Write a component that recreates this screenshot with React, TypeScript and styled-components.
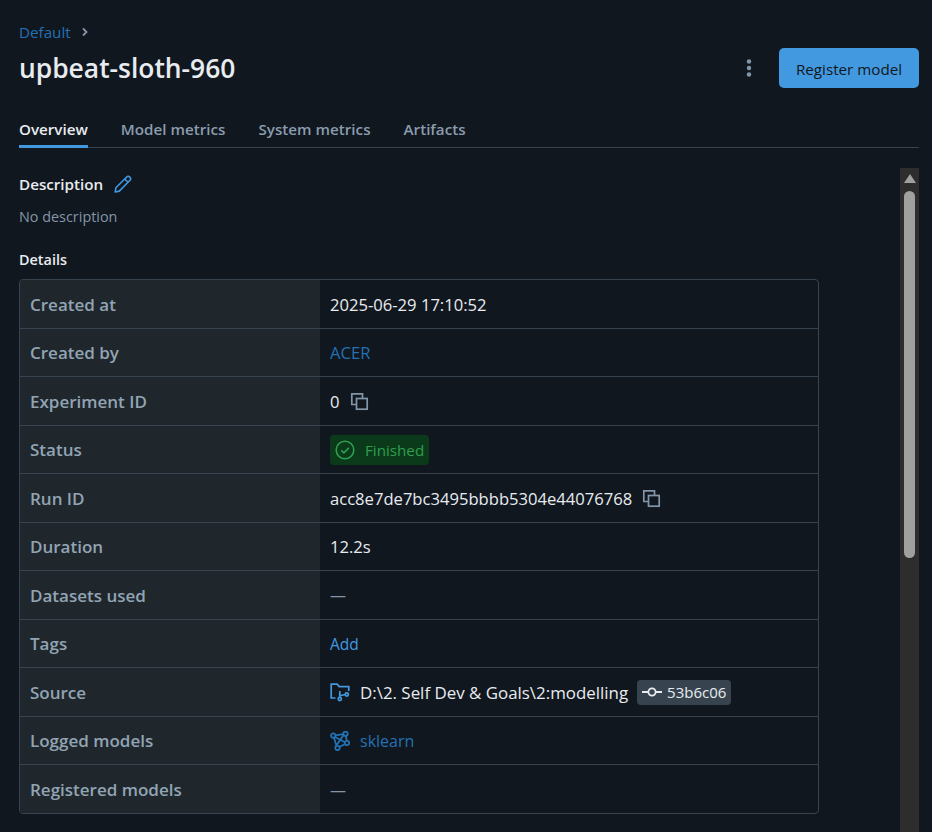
import React from 'react';
import styled, { createGlobalStyle } from 'styled-components';

const GlobalStyle = createGlobalStyle`
  html, body {
    margin: 0;
    padding: 0;
    height: 832px;
    overflow: hidden;
    background: #11171f;
  }
  body {
    font-family: "Open Sans", "Noto Sans", "Liberation Sans", sans-serif;
    color: #e8ecf0;
  }
  * {
    box-sizing: border-box;
  }
`;

const Page = styled.div`
  padding: 22px 13px 0 19px;
  height: 832px;
  overflow: hidden;
`;

const Breadcrumb = styled.div`
  display: flex;
  align-items: center;
  gap: 9px;
  height: 20px;
  font-size: 15.2px;
`;

const Crumb = styled.a`
  color: #2272b4;
`;

const TitleRow = styled.div`
  display: flex;
  align-items: center;
  justify-content: space-between;
  height: 40px;
  margin-top: 6px;
`;

const Title = styled.h1`
  margin: 0;
  font-size: 26.4px;
  font-weight: 600;
  line-height: 40px;
  color: #e8ecf0;
`;

const Actions = styled.div`
  display: flex;
  align-items: center;
  gap: 18px;
`;

const MoreButton = styled.div`
  display: flex;
  width: 24px;
  height: 24px;
  align-items: center;
  justify-content: center;
  margin-top: -1px;
`;

const PrimaryButton = styled.button`
  width: 140px;
  height: 40px;
  border: 0;
  border-radius: 5px;
  background: #4299e0;
  color: #11171c;
  font-family: inherit;
  font-size: 15.2px;
  padding: 2px 0 0;
`;

const Tabs = styled.div`
  display: flex;
  gap: 33px;
  margin-top: 26px;
  height: 34px;
  border-bottom: 1px solid #37444f;
`;

const Tab = styled.div<{ $active?: boolean }>`
  height: 34px;
  padding-top: 5px;
  font-size: 15.2px;
  font-weight: 600;
  line-height: 20px;
  color: ${(p) => (p.$active ? '#e8ecf0' : '#8a9cad')};
  border-bottom: ${(p) => (p.$active ? '3px solid #4299e0' : 'none')};
`;

const Body = styled.div`
  display: flex;
  justify-content: space-between;
  margin-top: 20px;
`;

const Content = styled.div`
  width: 800px;
  padding-top: 4px;
`;

const SectionHead = styled.div`
  display: flex;
  align-items: center;
  gap: 10px;
  height: 24px;
  font-size: 15.2px;
  font-weight: 600;
  color: #e8ecf0;
`;

const Muted = styled.div`
  margin-top: 11px;
  font-size: 14.4px;
  line-height: 20px;
  color: #8396a8;
`;

const DetailsHead = styled(SectionHead)`
  margin-top: 20px;
  font-size: 14.4px;
`;

const Table = styled.div`
  margin-top: 8px;
  border: 1px solid #37444f;
  border-radius: 4px;
  overflow: hidden;
`;

const Row = styled.div`
  display: grid;
  grid-template-columns: 300px 1fr;
  height: 48.5px;
  border-bottom: 1px solid #37444f;

  &:last-child {
    height: 48px;
    border-bottom: 0;
  }
`;

const Label = styled.div`
  display: flex;
  align-items: center;
  padding: 1px 0 0 10px;
  background: #1f272d;
  font-size: 17px;
  font-weight: 600;
  color: #92a4b3;
`;

const Value = styled.div`
  display: flex;
  align-items: center;
  padding: 1px 0 0 10px;
  font-size: 16.6px;
  color: #e8ecf0;
`;

const LinkText = styled.span`
  color: #2272b4;
`;

const ModelLink = styled(LinkText)`
  font-size: 16px;
`;

const SourcePath = styled.span`
  font-size: 16.9px;
`;

const AddLink = styled.span`
  color: #4299e0;
  font-size: 15.5px;
`;

const Dash = styled.span`
  color: #8396a8;
  font-size: 16px;
`;

const CopyIcon = styled.svg`
  margin-left: 10px;
  flex: none;
`;

const LeadIcon = styled.svg`
  margin-right: 10px;
  flex: none;
`;

const StatusPill = styled.div`
  display: flex;
  align-items: center;
  gap: 10px;
  height: 30px;
  padding: 0 5px;
  border-radius: 4px;
  background: #0b3a1a;
  color: #2f9e4f;
  font-size: 15.2px;
`;

const CommitTag = styled.div`
  display: flex;
  align-items: center;
  gap: 5px;
  height: 25px;
  margin-left: 9px;
  padding: 0 5px;
  border-radius: 4px;
  background: #37444f;
  font-size: 15px;
  color: #e8ecf0;
`;

const ScrollTrack = styled.div`
  width: 19px;
  height: 664px;
  display: flex;
  flex-direction: column;
  align-items: center;
  background: #2d2d2d;
  padding-top: 6px;
`;

const ScrollArrow = styled.div`
  width: 0;
  height: 0;
  border-left: 6.5px solid transparent;
  border-right: 6.5px solid transparent;
  border-bottom: 9px solid #a0a0a0;
`;

const ScrollThumb = styled.div`
  width: 11px;
  height: 367px;
  margin-top: 8px;
  border-radius: 6px;
  background: #a0a0a0;
`;

const Kebab = () => (
  <svg width="24" height="24" viewBox="0 0 24 24" fill="#8396a8">
    <circle cx="12" cy="5.5" r="2.2" />
    <circle cx="12" cy="12" r="2.2" />
    <circle cx="12" cy="18.5" r="2.2" />
  </svg>
);

const Pencil = () => (
  <svg width="20" height="20" viewBox="0 0 20 20" fill="none" stroke="#4299e0" strokeWidth="1.6" strokeLinejoin="round">
    <path d="M2.2 18l.7-4.2L13.7 3a2.1 2.1 0 0 1 3 0l.3.3a2.1 2.1 0 0 1 0 3L6.3 17.1 2.2 18z" />
    <path d="M11.8 5l3.2 3.2" />
  </svg>
);

const Copy = () => (
  <CopyIcon width="19" height="19" viewBox="0 0 19 19" fill="none" stroke="#8396a8" strokeWidth="1.7">
    <path d="M12.5 6V1.8H1.8v10.7H6" />
    <rect x="6.5" y="6.5" width="10.7" height="10.7" />
  </CopyIcon>
);

const CheckCircle = () => (
  <svg width="20" height="20" viewBox="0 0 20 20" fill="none" stroke="#2f9e4f" strokeWidth="1.6">
    <circle cx="10" cy="10" r="8.8" />
    <path d="M6.2 10.2l2.7 2.7 5-5" />
  </svg>
);

const FolderBranch = () => (
  <LeadIcon width="20" height="20" viewBox="0 0 20 20" fill="none" stroke="#4299e0" strokeWidth="1.7">
    <path d="M5.5 16H1.2V2.2h6l2 2.4h9.6V9" />
    <circle cx="9.8" cy="17" r="1.6" />
    <circle cx="16.8" cy="12.5" r="1.6" />
    <path d="M9.8 9v6.4M9.8 13.8c2.5 0 3.5-1.3 5.4-1.3" />
  </LeadIcon>
);

const ModelsIcon = () => (
  <LeadIcon width="20" height="20" viewBox="0 0 20 20" fill="none" stroke="#2272b4" strokeWidth="1.8">
    <circle cx="3.2" cy="4.6" r="2.2" />
    <circle cx="15.5" cy="2.8" r="2.2" />
    <circle cx="17" cy="12" r="2.2" />
    <circle cx="7.5" cy="17" r="2.2" />
    <path d="M5.4 4.3l7.9-1.2M15.8 5l1 4.8M15 13l-5.6 3M6.5 15L4 6.8M5 6l10 5.2M13.6 4l-7.6 11" />
  </LeadIcon>
);

const CommitIcon = () => (
  <svg width="20" height="12" viewBox="0 0 20 12" fill="none" stroke="#e8ecf0" strokeWidth="1.8">
    <circle cx="10" cy="6" r="3.6" />
    <path d="M0 6h6.4M13.6 6H20" />
  </svg>
);

const Chevron = () => (
  <svg width="10" height="10" viewBox="0 0 10 10" fill="none" stroke="#8396a8" strokeWidth="1.8">
    <path d="M3 1.5L6.5 5 3 8.5" />
  </svg>
);

const App = () => (
  <>
    <GlobalStyle />
    <Page>
      <Breadcrumb>
        <Crumb>Default</Crumb>
        <Chevron />
      </Breadcrumb>
      <TitleRow>
        <Title>upbeat-sloth-960</Title>
        <Actions>
          <MoreButton>
            <Kebab />
          </MoreButton>
          <PrimaryButton>Register model</PrimaryButton>
        </Actions>
      </TitleRow>
      <Tabs>
        <Tab $active>Overview</Tab>
        <Tab>Model metrics</Tab>
        <Tab>System metrics</Tab>
        <Tab>Artifacts</Tab>
      </Tabs>
      <Body>
        <Content>
          <SectionHead>
            Description
            <Pencil />
          </SectionHead>
          <Muted>No description</Muted>
          <DetailsHead>Details</DetailsHead>
          <Table>
            <Row>
              <Label>Created at</Label>
              <Value>2025-06-29 17:10:52</Value>
            </Row>
            <Row>
              <Label>Created by</Label>
              <Value>
                <LinkText>ACER</LinkText>
              </Value>
            </Row>
            <Row>
              <Label>Experiment ID</Label>
              <Value>
                0
                <Copy />
              </Value>
            </Row>
            <Row>
              <Label>Status</Label>
              <Value>
                <StatusPill>
                  <CheckCircle />
                  Finished
                </StatusPill>
              </Value>
            </Row>
            <Row>
              <Label>Run ID</Label>
              <Value>
                acc8e7de7bc3495bbbb5304e44076768
                <Copy />
              </Value>
            </Row>
            <Row>
              <Label>Duration</Label>
              <Value>12.2s</Value>
            </Row>
            <Row>
              <Label>Datasets used</Label>
              <Value>
                <Dash>—</Dash>
              </Value>
            </Row>
            <Row>
              <Label>Tags</Label>
              <Value>
                <AddLink>Add</AddLink>
              </Value>
            </Row>
            <Row>
              <Label>Source</Label>
              <Value>
                <FolderBranch />
                <SourcePath>D:\2. Self Dev &amp; Goals\2:modelling</SourcePath>
                <CommitTag>
                  <CommitIcon />
                  53b6c06
                </CommitTag>
              </Value>
            </Row>
            <Row>
              <Label>Logged models</Label>
              <Value>
                <ModelsIcon />
                <ModelLink>sklearn</ModelLink>
              </Value>
            </Row>
            <Row>
              <Label>Registered models</Label>
              <Value>
                <Dash>—</Dash>
              </Value>
            </Row>
          </Table>
        </Content>
        <ScrollTrack>
          <ScrollArrow />
          <ScrollThumb />
        </ScrollTrack>
      </Body>
    </Page>
  </>
);

export default App;
